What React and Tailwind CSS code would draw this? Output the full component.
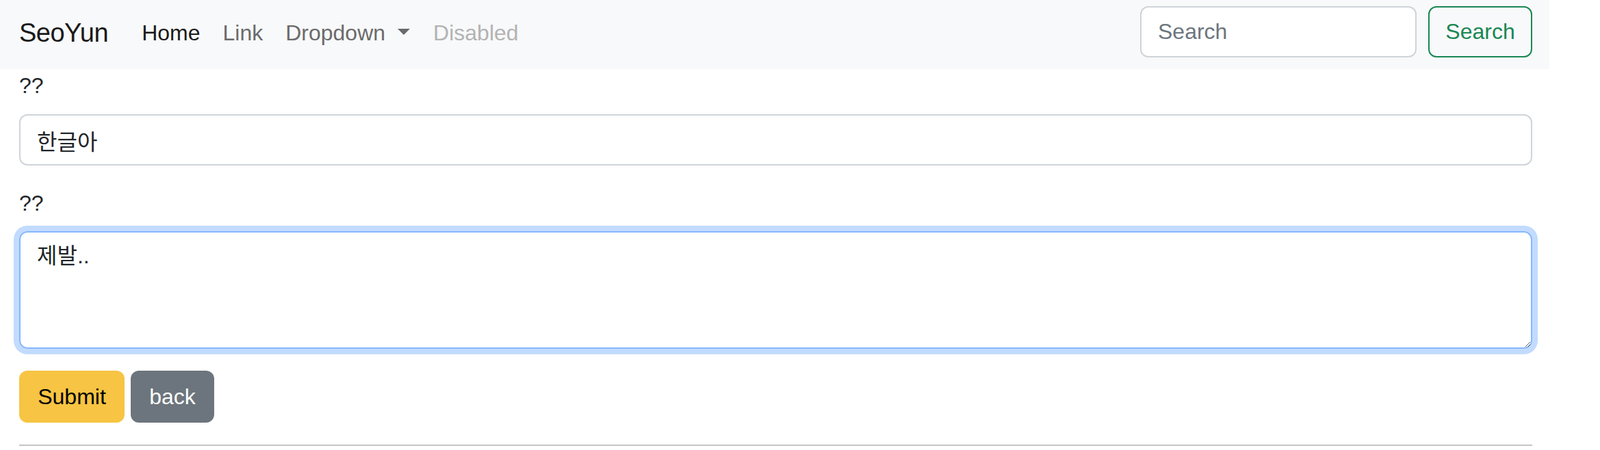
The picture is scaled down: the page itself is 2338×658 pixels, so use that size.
import React, { useState } from "react";

export default function App() {
  const [title, setTitle] = useState("한글아");
  const [content, setContent] = useState("제발..");

  return (
    <div className="w-[2264px] bg-white text-[#212529] font-['Liberation_Sans','Noto_Sans_CJK_KR',sans-serif]">
      {/* navbar */}
      <nav className="h-[101px] bg-[#f8f9fa] flex items-center pl-[28px] pr-[25px] pb-[9px]">
        <a href="#" className="mt-[3px] text-[38px] tracking-[-0.5px] leading-none text-[#1a1a1a] mr-[33px]">
          SeoYun
        </a>
        <ul className="mt-[3px] flex items-center text-[32px] leading-none">
          <li>
            <a href="#" className="block px-[16px] text-[#1a1a1a]">Home</a>
          </li>
          <li>
            <a href="#" className="block px-[17px] text-[#6b6b6b]">Link</a>
          </li>
          <li>
            <a href="#" className="flex items-center pl-[16px] pr-[18px] text-[#6b6b6b]">
              Dropdown
              <span className="ml-[18px] mb-[2px] w-0 h-0 border-x-[9px] border-x-transparent border-t-[9px] border-t-[#6b6b6b]" />
            </a>
          </li>
          <li>
            <span className="block px-[16px] text-[#b3b3b3]">Disabled</span>
          </li>
        </ul>
        <form className="ml-auto flex items-center gap-[17px]" onSubmit={(e) => e.preventDefault()}>
          <input
            type="search"
            placeholder="Search"
            className="w-[404px] h-[75px] px-[24px] text-[32px] bg-white border-2 border-[#ced4da] rounded-[12px] outline-none placeholder:text-[#6c757d]"
          />
          <button
            type="submit"
            className="w-[152px] h-[75px] text-[32px] text-[#198754] border-2 border-[#198754] rounded-[12px]"
          >
            Search
          </button>
        </form>
      </nav>

      {/* form */}
      <form className="pl-[28px] pr-[25px]" onSubmit={(e) => e.preventDefault()}>
        <label className="block text-[32px] leading-[48px] mb-[18px]">??</label>
        <input
          type="text"
          value={title}
          onChange={(e) => setTitle(e.target.value)}
          className="block w-full h-[75px] px-[24px] text-[32px] border-2 border-[#ced4da] rounded-[12px] outline-none mb-[31px]"
        />

        <label className="block text-[32px] leading-[48px] mb-[17px]">??</label>
        <textarea
          rows={3}
          value={content}
          onChange={(e) => setContent(e.target.value)}
          className="block w-full h-[172px] px-[24px] py-[10px] text-[32px] leading-[48px] border-2 border-[#86b7fe] rounded-[12px] outline-none shadow-[0_0_0_8px_rgba(13,110,253,0.25)] mb-[32px]"
        />

        <div className="flex gap-[9px]">
          <button type="submit" className="w-[154px] h-[76px] text-[32px] text-black bg-[#f7c443] rounded-[12px]">
            Submit
          </button>
          <button type="button" className="w-[122px] h-[76px] text-[32px] text-white bg-[#6c757d] rounded-[12px]">
            back
          </button>
        </div>

        <hr className="mt-[32px] border-t-2 border-[#c4c4c4]" />
      </form>
    </div>
  );
}
